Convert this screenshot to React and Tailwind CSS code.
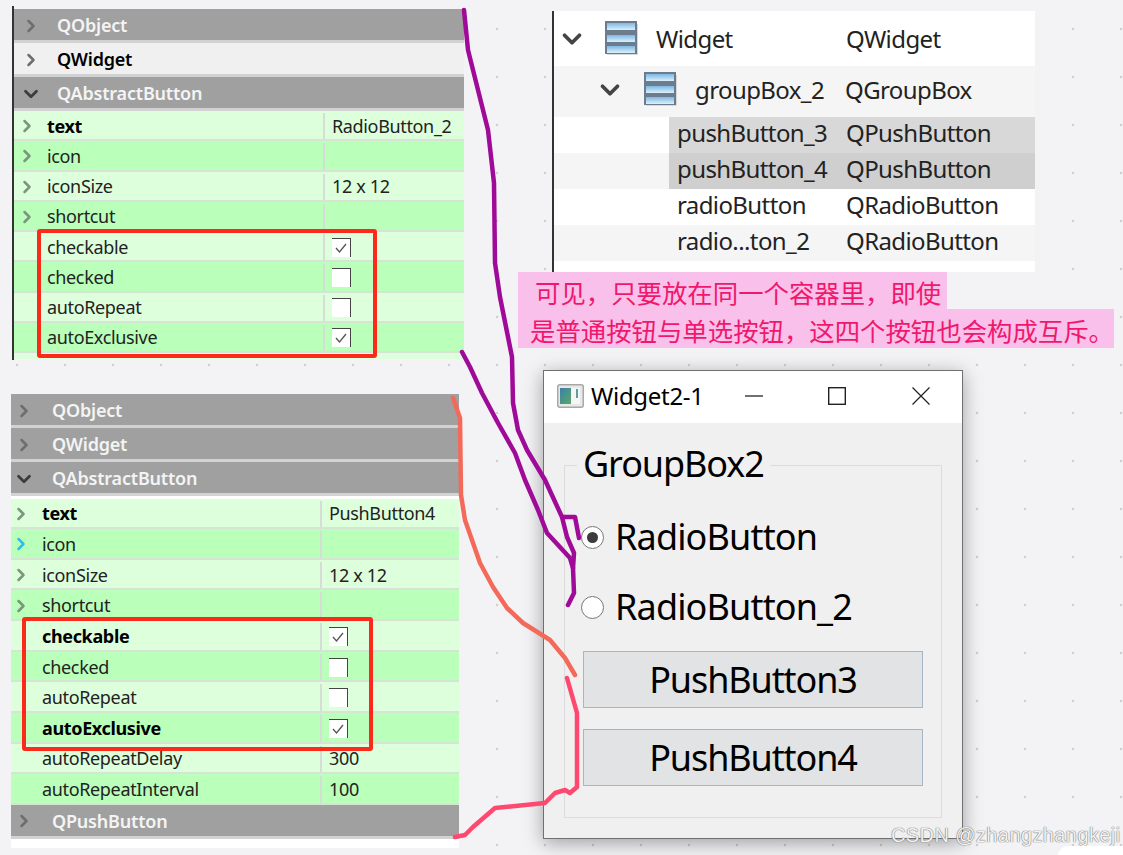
import { ChevronRight, ChevronDown } from "lucide-react";

const uiFont = "font-['Noto_Sans','Noto_Sans_CJK_SC',sans-serif]";

const topProps = [
  { name: "text", value: "RadioButton_2", bold: true, arrow: true },
  { name: "icon", arrow: true },
  { name: "iconSize", value: "12 x 12", arrow: true },
  { name: "shortcut", arrow: true },
  { name: "checkable", check: true },
  { name: "checked", check: false },
  { name: "autoRepeat", check: false },
  { name: "autoExclusive", check: true },
];

const bottomProps = [
  { name: "text", value: "PushButton4", bold: true, arrow: true },
  { name: "icon", arrow: true, cyan: true },
  { name: "iconSize", value: "12 x 12", arrow: true },
  { name: "shortcut", arrow: true },
  { name: "checkable", check: true, bold: true },
  { name: "checked", check: false },
  { name: "autoRepeat", check: false },
  { name: "autoExclusive", check: true, bold: true },
  { name: "autoRepeatDelay", value: "300" },
  { name: "autoRepeatInterval", value: "100" },
];

function SectionRow({ label, open, light, headCell }) {
  const Icon = open ? ChevronDown : ChevronRight;
  return (
    <div
      className={`flex h-[34px] items-center border-b-[3px] border-[#d2d2d2] pt-[2px] text-[18px] font-semibold tracking-[-0.2px] ${
        light ? "bg-[#f0f0f0] text-black" : "bg-[#a0a0a0] text-[#f4f4f4]"
      }`}
    >
      <div className={`shrink-0 ${headCell}`}>
        <Icon size={open ? 22 : 20} strokeWidth={3} className={open ? "text-[#3c3c3c]" : "text-[#6e6e6e]"} />
      </div>
      {label}
    </div>
  );
}

function CheckBox({ checked }) {
  return (
    <div className="flex h-[19px] w-[19px] items-center justify-center border-t border-r border-[#444] bg-white">
      {checked && (
        <svg width="14" height="12" viewBox="0 0 14 12" fill="none">
          <path d="M2 6l3.5 4L12 2" stroke="#555" strokeWidth="1.3" />
        </svg>
      )}
    </div>
  );
}

function PropRow({ row, index, rowCell, height }) {
  return (
    <div
      className={`flex ${height} border-b-2 border-[#d6e4d6] pt-[2px] text-[18px] tracking-[-0.35px] text-[#222] ${
        index % 2 === 0 ? "bg-[#deffdc]" : "bg-[#baffba]"
      }`}
    >
      <div className="flex w-[311px] shrink-0 items-center border-r-2 border-[#d6dcd6]">
        <div className={`shrink-0 ${rowCell}`}>
          {row.arrow && (
            <ChevronRight
              size={20}
              strokeWidth={3}
              className={row.cyan ? "text-[#2cc0e8]" : "text-[#7d957d]"}
            />
          )}
        </div>
        <span className={row.bold ? "font-bold text-black" : ""}>{row.name}</span>
      </div>
      <div className="flex items-center pl-[7px]">
        {row.check !== undefined ? <CheckBox checked={row.check} /> : row.value}
      </div>
    </div>
  );
}

function TreeIcon() {
  return (
    <svg width="35" height="35" viewBox="0 0 35 35" className="shrink-0">
      <defs>
        <linearGradient id="bar" x1="0" y1="0" x2="0" y2="1">
          <stop offset="0" stopColor="#7db8e4" />
          <stop offset="1" stopColor="#dcf0fa" />
        </linearGradient>
      </defs>
      <rect x="3" y="3" width="31" height="31" fill="#d8d8d8" />
      <rect x="1" y="0" width="32" height="33" fill="#6c7c8e" />
      {[2, 14, 25].map((y) => (
        <rect key={y} x="3" y={y} width="28" height="7" fill="url(#bar)" />
      ))}
    </svg>
  );
}

function TreeChild({ name, type, rowBg, selBg }) {
  return (
    <div className={`flex h-[36px] items-center pl-[115px] ${rowBg}`}>
      <div className={`flex h-full flex-1 items-center pb-[4px] pl-[8px] ${selBg}`}>
        <span className="w-[169px]">{name}</span>
        {type}
      </div>
    </div>
  );
}

function Radio({ checked }) {
  return (
    <div className="flex h-[23px] w-[23px] shrink-0 items-center justify-center rounded-full border border-[#777] bg-white">
      {checked && <div className="h-[11px] w-[11px] rounded-full bg-[#3c3c3c]" />}
    </div>
  );
}

export default function App() {
  return (
    <div
      className={`relative h-[855px] w-[1123px] overflow-hidden bg-[#f3f3f6] bg-[radial-gradient(circle,#cfcfcf_1.4px,transparent_1.6px)] bg-[size:48px_48px] bg-[position:-7px_5px] ${uiFont}`}
    >
      {/* top property panel */}
      <div className="absolute left-[12px] top-[6px] h-[354px] w-[452px] border-l-2 border-[#333] pt-[3px]">
        <SectionRow label="QObject" headCell="w-[43px] pl-[7px]" />
        <SectionRow label="QWidget" light headCell="w-[43px] pl-[7px]" />
        <SectionRow label="QAbstractButton" open headCell="w-[43px] pl-[6px]" />
        {topProps.map((row, i) => (
          <PropRow key={row.name} row={row} index={i} rowCell="w-[33px] pl-[3px]" height="h-[30.25px]" />
        ))}
        <div className="h-[6px] bg-[#deffdc]" />
        <div className="absolute left-[23px] top-[223px] h-[129px] w-[340px] rounded-[3px] border-4 border-[#fb2a1a]" />
      </div>

      {/* bottom property panel */}
      <div className="absolute left-[11px] top-[394px] w-[448px] bg-white pb-[9px]">
        <SectionRow label="QObject" headCell="w-[41px] pl-[3px]" />
        <SectionRow label="QWidget" headCell="w-[41px] pl-[3px]" />
        <SectionRow label="QAbstractButton" open headCell="w-[41px] pl-[2px]" />
        <div className="h-[2.5px]" />
        {bottomProps.map((row, i) => (
          <PropRow key={row.name} row={row} index={i} rowCell="w-[31px]" height="h-[30.65px]" />
        ))}
        <SectionRow label="QPushButton" headCell="w-[41px] pl-[3px]" />
        <div className="absolute left-[11px] top-[223px] h-[134px] w-[351px] rounded-[3px] border-4 border-[#fb2a1a]" />
      </div>

      {/* object tree */}
      <div className="absolute left-[552px] top-[11px] h-[261px] w-[483px] border-l-2 border-[#333] bg-white text-[24px] tracking-[-0.6px] text-[#222]">
        <div className="flex h-[55px] items-center pl-[3px]">
          <ChevronDown size={30} strokeWidth={3} className="mr-[17px] shrink-0 text-[#444]" />
          <TreeIcon />
          <span className="ml-[17px] w-[190px]">Widget</span>
          QWidget
        </div>
        <div className="flex h-[51px] items-center bg-[#f5f5f5] pb-[4px] pl-[41px]">
          <ChevronDown size={30} strokeWidth={3} className="mr-[18px] shrink-0 text-[#444]" />
          <TreeIcon />
          <span className="ml-[17px] w-[150px]">groupBox_2</span>
          QGroupBox
        </div>
        <TreeChild name="pushButton_3" type="QPushButton" rowBg="bg-white" selBg="bg-[#d8d8d8]" />
        <TreeChild name="pushButton_4" type="QPushButton" rowBg="bg-[#f5f5f5]" selBg="bg-[#cfcfcf]" />
        <TreeChild name="radioButton" type="QRadioButton" rowBg="bg-white" />
        <TreeChild name="radio...ton_2" type="QRadioButton" rowBg="bg-[#f5f5f5]" />
      </div>

      {/* pink note */}
      <div className="absolute left-[518px] top-[272px] flex flex-col items-start text-[25.4px] leading-[40px] text-[#f0186c] font-['Noto_Sans_CJK_SC',sans-serif]">
        <div className="h-[37px] w-[429px] bg-[#f8c0ea] pl-[17px]">可见，只要放在同一个容器里，即使</div>
        <div className="h-[39px] w-[596px] whitespace-nowrap bg-[#f8c0ea] pl-[12px] leading-[42px]">
          是普通按钮与单选按钮，这四个按钮也会构成互斥。
        </div>
      </div>

      {/* running window */}
      <div className="absolute left-[543px] top-[370px] h-[469px] w-[420px] border border-[#707070] bg-[#f0f0f0] text-black shadow-[0_4px_18px_rgba(0,0,0,0.35)]">
        <div className="flex h-[52px] items-center bg-white pb-[3px] pl-[13px] text-[24px] tracking-[-0.3px]">
          <svg width="27" height="24" viewBox="0 0 27 24" className="mr-[7px] shrink-0">
            <defs>
              <linearGradient id="pane" x1="0" y1="0" x2="1" y2="1">
                <stop offset="0" stopColor="#3c80a8" />
                <stop offset="1" stopColor="#5aa868" />
              </linearGradient>
            </defs>
            <rect x="0.75" y="0.75" width="25.5" height="22.5" rx="2" fill="#e8e8e8" stroke="#a8a8a8" strokeWidth="1.5" />
            <rect x="3" y="4" width="11" height="16" fill="url(#pane)" />
            <rect x="14" y="4" width="9" height="16" fill="#f6f6f6" />
            <rect x="19" y="5" width="2" height="9" fill="#5da0a0" />
          </svg>
          <span className="w-[154px]">Widget2-1</span>
          <svg width="18" height="18" viewBox="0 0 18 18" className="mr-[65px] shrink-0" fill="none" stroke="#222" strokeWidth="1.3">
            <path d="M0 9h18" />
          </svg>
          <svg width="18" height="18" viewBox="0 0 18 18" className="mr-[66px] shrink-0" fill="none" stroke="#222" strokeWidth="1.4">
            <rect x="0.7" y="0.7" width="16.6" height="16.6" />
          </svg>
          <svg width="18" height="18" viewBox="0 0 18 18" className="shrink-0" fill="none" stroke="#222" strokeWidth="1.2">
            <path d="M0.5 0.5l17 17M17.5 0.5l-17 17" />
          </svg>
        </div>
        <div className="relative mx-[20px] mt-[42px] h-[353px] border border-[#dcdcdc] px-[18px] pt-[49px] text-[36px] tracking-[-0.85px]">
          <div className="absolute left-[12px] top-[-24px] bg-[#f0f0f0] px-[6px] leading-[44px] tracking-[-1.1px]">
            GroupBox2
          </div>
          <div className="-ml-[2px] flex h-[44px] items-center gap-[11px]">
            <Radio checked />
            RadioButton
          </div>
          <div className="-ml-[2px] mt-[26px] flex h-[44px] items-center gap-[11px]">
            <Radio />
            RadioButton_2
          </div>
          <div className="mt-[22px] flex h-[57px] items-center justify-center border-[1.5px] border-[#a9b5c4] bg-[#e1e3e5] tracking-[-1.1px]">
            PushButton3
          </div>
          <div className="mt-[21px] flex h-[57px] items-center justify-center border-[1.5px] border-[#a9b5c4] bg-[#e1e3e5] tracking-[-1.1px]">
            PushButton4
          </div>
        </div>
      </div>

      {/* hand drawn strokes */}
      <svg width="1123" height="855" viewBox="0 0 1123 855" fill="none" strokeLinecap="round" strokeLinejoin="round" className="pointer-events-none absolute left-0 top-0">
        <g stroke="#a00a98" strokeWidth="4.5">
          <path d="M464 10L468 50L478 90L488 130L494 183L495 263L500 297L512 357L513 403L518 430L527 450L545 480L562 517L567 537L574 553L573 568L574 593L568 605" />
          <path d="M563 517L575 517L579 538" />
          <path d="M462 352L470 367L482 393L498 423L515 453L525 480L538 510L547 533L570 558L573 568" />
        </g>
        <path d="M453 398L460 418L461 495L465 520L480 563L493 587L507 608L523 623L550 640L565 658L575 675" stroke="#f46a5a" strokeWidth="4.5" />
        <path d="M567 678L577 713L577 787L570 793L565 790L555 793L545 803L495 808L473 827L465 835L455 837" stroke="#ff4870" strokeWidth="4.5" />
      </svg>

      {/* watermark */}
      <div className="absolute left-[891px] top-[823px] whitespace-nowrap text-[20px] leading-[24px] tracking-[0.4px] text-[#f2f2f2] [text-shadow:0_0_1px_#666,0_0_1px_#666] font-['Liberation_Sans',sans-serif]">
        CSDN @zhangzhangkeji
      </div>
      <div className="absolute left-[1058px] top-[846px] h-[20px] w-[80px] rounded-tl-[10px] bg-white" />
    </div>
  );
}
